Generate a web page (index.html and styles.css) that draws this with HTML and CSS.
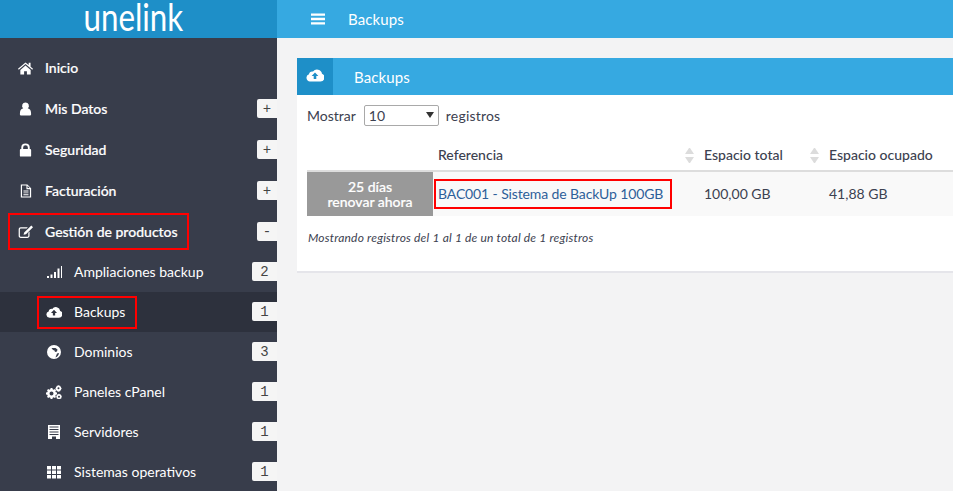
FILE: index.html
```html
<!DOCTYPE html>
<html lang="es">
<head>
<meta charset="utf-8">
<title>Backups</title>
<link rel="stylesheet" href="styles.css">
</head>
<body>
<svg class="defs" width="0" height="0" aria-hidden="true">
  <symbol id="cloud" viewBox="0 0 18 14"><path fill-rule="evenodd" d="M4 13.500A3.700 3.700 0 0 1 3 6.300 3 3 0 0 1 7 3.600 5 5 0 0 1 16 5.800a4 4 0 0 1-1.500 7.700ZM9 4.600 5.600 8h2.100v3h2.600V8h2.100Z"/></symbol>
</svg>
<div class="app">
  <header class="top">
    <div class="logo"><span class="logo-text">unelink</span></div>
    <div class="topbar">
      <svg class="bars" viewBox="0 0 15 12"><path d="M0 0h15v2.600H0zM0 4.700h15v2.600H0zM0 9.400h15V12H0z"/></svg>
      <span class="topbar-title">Backups</span>
    </div>
  </header>
  <div class="layout">
    <nav class="side">
      <a class="item"><svg class="ico" viewBox="0 0 16 14"><path d="M8 1 0 7.800l.8 1L8 2.800l7.200 6 .8-1-2.600-2.200V1.400h-2v2.500ZM2.500 9v5h4v-3.500h3V14h4V9L8 4.300Z"/></svg><span>Inicio</span></a>
      <a class="item"><svg class="ico" viewBox="0 0 16 14"><path d="M8 0a3.600 3.600 0 0 1 2.400 6.300C13 6.800 14 9 14 12.500 14 13.500 13.300 14 12.500 14h-9C2.700 14 2 13.500 2 12.500 2 9 3 6.800 5.600 6.300A3.600 3.600 0 0 1 8 0Z"/></svg><span>Mis Datos</span><b class="tag">+</b></a>
      <a class="item"><svg class="ico" viewBox="0 0 16 14"><path fill-rule="evenodd" d="M3.500 6V4.200a4.500 4.200 0 0 1 9 0V6h.5c.6 0 1 .4 1 1v6c0 .6-.4 1-1 1H3c-.6 0-1-.4-1-1V7c0-.6.4-1 1-1ZM5.500 6h5V4.200a2.500 2.300 0 0 0-5 0Z"/></svg><span>Seguridad</span><b class="tag">+</b></a>
      <a class="item"><svg class="ico" viewBox="0 0 16 14"><path fill-rule="evenodd" d="M3 0h7l4 4v10H3ZM4.300 1.200v11.600h8.400V5H9V1.200ZM10.200 1.500V3.800h2.300ZM5.800 6.500h5.400v1H5.800ZM5.800 8.500h5.400v1H5.800ZM5.800 10.500h5.400v1H5.800Z"/></svg><span>Facturación</span><b class="tag">+</b></a>
      <a class="item"><svg class="ico" viewBox="0 0 16 14"><path d="M14.200 0 16 1.800 8.500 9.300l-2.600.7.700-2.600ZM3 2h7.500L9.200 3.300H3c-.6 0-1 .4-1 1V11c0 .6.400 1 1 1h7c.6 0 1-.4 1-1V7.800l1.300-1.300V11c0 1.400-1 2.400-2.300 2.400H3C1.600 13.400.7 12.400.7 11V4.300C.7 3 1.600 2 3 2Z"/></svg><span>Gestión de productos</span><b class="tag">-</b><i class="mark mark-gestion"></i></a>
      <a class="sub"><svg class="ico-sub" viewBox="0 0 16 14"><path d="M1 11h2v2H1zM4.500 9.500h2V13h-2zM8 7h2v6H8zM11.500 3.500h2V13h-2zM15 1h1v12h-1z"/></svg><span>Ampliaciones backup</span><b class="num">2</b></a>
      <a class="sub is-active"><svg class="ico-sub" viewBox="0 0 18 14"><use href="#cloud"/></svg><span>Backups</span><b class="num">1</b><i class="mark mark-backups"></i></a>
      <a class="sub"><svg class="ico-sub" viewBox="0 0 16 14"><path fill-rule="evenodd" d="M8 0a7 7 0 1 1 0 14A7 7 0 0 1 8 0ZM5.500 3 7 5l1.500.5L9 7l2-.5.500-2L9.500 3ZM13 8l-2 .5-1 2.500-.5 1.500a5.500 5.500 0 0 0 3.500-4.500Z"/></svg><span>Dominios</span><b class="num">3</b></a>
      <a class="sub"><svg class="ico-sub" viewBox="0 0 16 14"><path fill-rule="evenodd" d="M4.600 3h1.800l.3 1.300 1 .4L8.900 4l1.200 1.200-.7 1.100.4 1 1.200.3v1.800l-1.200.3-.4 1-.1.100.7 1.100L8.800 13l-1.100-.7-1 .4-.3 1.300H4.600l-.3-1.300-1-.4-1.100.7L1 11.800l.7-1.100-.4-1L0 9.400V7.600l1.300-.3.4-1L1 5.200 2.200 4l1.100.7 1-.4ZM5.500 6.500a2 2 0 1 0 0 4 2 2 0 0 0 0-4ZM12.500 0l.6.8.9-.2.3 1 .9.3-.2.9.8.7-.8.700.2.900-.9.300-.3 1-.9-.2-.6.8-.6-.8-.9.200-.3-1-.9-.3.2-.9-.8-.7.8-.7-.2-.9.900-.3.300-1 .9.200ZM12.500 2.300a1 1 0 1 0 0 2 1 1 0 0 0 0-2ZM13 8.600l.5.700.9-.2.2.9.9.3-.2.800.7.600-.7.700.2.800-.9.300-.2.900-.9-.2-.5.700-.6-.7-.8.200-.3-.9-.8-.3.200-.8-.7-.700.7-.6-.2-.8.800-.3.300-.9.800.2ZM13 10.700a1 1 0 1 0 0 2 1 1 0 0 0 0-2Z"/></svg><span>Paneles cPanel</span><b class="num">1</b></a>
      <a class="sub"><svg class="ico-sub" viewBox="0 0 16 14"><path fill-rule="evenodd" d="M2 0h12v14H10v-2.500H6V14H2ZM3.500 1.500v1h9v-1ZM3.500 4v1h9V4ZM3.500 6.500v1h9v-1ZM3.500 9v1h9V9Z"/></svg><span>Servidores</span><b class="num">1</b></a>
      <a class="sub"><svg class="ico-sub" viewBox="0 0 16 14"><path d="M1 1h4v3.500H1zM6 1h4v3.500H6zM11 1h4v3.500h-4zM1 5.500h4V9H1zM6 5.500h4V9H6zM11 5.500h4V9h-4zM1 10h4v3.500H1zM6 10h4v3.500H6zM11 10h4v3.500h-4z"/></svg><span>Sistemas operativos</span><b class="num">1</b></a>
    </nav>
    <main class="main">
      <section class="panel">
        <div class="panel-head">
          <div class="panel-ico"><svg class="cloud-white" viewBox="0 0 18 14"><use href="#cloud"/></svg></div>
          <h1 class="panel-title">Backups</h1>
        </div>
        <div class="panel-body">
          <div class="length">
            <span>Mostrar</span>
            <span class="select-wrap"><select class="select"><option>10</option><option>25</option></select></span>
            <span class="length-end">registros</span>
          </div>
          <table class="grid">
            <colgroup><col class="c1"><col class="c2"><col class="c3"><col></colgroup>
            <thead>
              <tr>
                <th></th>
                <th class="sortable">Referencia</th>
                <th class="sortable">Espacio total</th>
                <th>Espacio ocupado</th>
              </tr>
            </thead>
            <tbody>
              <tr>
                <td class="renew"><span class="renew-line">25 días</span><span class="renew-line">renovar ahora</span></td>
                <td class="ref"><a class="ref-link">BAC001 - Sistema de BackUp 100GB</a></td>
                <td>100,00 GB</td>
                <td>41,88 GB</td>
              </tr>
            </tbody>
          </table>
          <p class="info">Mostrando registros del 1 al 1 de un total de 1 registros</p>
        </div>
      </section>
    </main>
  </div>
</div>
</body>
</html>
```

FILE: styles.css
```css
*, *::before, *::after { box-sizing: border-box; }
html, body { margin: 0; height: 100%; overflow: hidden; }
body { font-family: Lato, "Liberation Sans", sans-serif; font-size: 14px; color: #3c4150; background: #f3f3f4; }
.defs { position: absolute; }
.app { display: flex; flex-direction: column; height: 100vh; }

.top { display: flex; height: 38px; flex: none; }
.logo { width: 277px; background: #1e8fc8; color: #fff; display: flex; justify-content: center; align-items: center; padding-right: 10px; }
.logo-text { display: block; font-size: 36px; font-weight: 400; line-height: 26px; transform: scale(.87, 1.06); margin-top: -6px; }
.topbar { flex: 1; background: #36a9e1; color: #fff; display: flex; align-items: center; padding-left: 34px; }
.bars { width: 14px; height: 12px; fill: #fff; }
.topbar-title { margin-left: 23px; font-size: 15px; letter-spacing: .1px; }

.layout { flex: 1; display: flex; min-height: 0; }
.side { width: 277px; flex: none; background: #383d4b; padding-top: 9px; overflow: hidden; color: #fff; }
.item, .sub { position: relative; display: flex; align-items: center; }
.item { height: 41px; padding-left: 18px; font-weight: 500; -webkit-text-stroke: .2px #fff; }
.ico { width: 15px; height: 14px; fill: #fff; margin-right: 12px; flex: none; }
.sub { height: 40px; padding: 0 0 1px 46px; }
.ico-sub { width: 16px; height: 14px; fill: #fff; margin-right: 12px; flex: none; }
.is-active { background: #2d313d; }
.tag, .num { margin-left: auto; height: 19px; background: #f5f5f5; color: #444; border-radius: 2px 0 0 2px; display: flex; align-items: center; justify-content: center; font-family: "Liberation Mono", monospace; font-size: 14px; font-weight: 400; -webkit-text-stroke: 0; }
.tag { width: 20px; }
.num { width: 25px; }
.mark { position: absolute; border: 2px solid #f00; }
.mark-gestion { left: 8px; top: 2px; width: 181px; height: 37px; }
.mark-backups { left: 37px; top: 4px; width: 100px; height: 33px; }

.main { flex: 1; min-width: 0; padding: 20px 0 0 20px; }
.panel { background: #fff; border-bottom: 2px solid #e5e5ea; height: 215px; }
.panel-head { display: flex; align-items: center; height: 37px; background: #36a9e1; color: #fff; }
.panel-ico { width: 36px; height: 37px; background: #1e8fc8; display: flex; align-items: center; justify-content: center; padding-bottom: 4px; }
.cloud-white { width: 18px; height: 14px; fill: #fff; }
.panel-title { margin: 0 0 0 21px; font-size: 15px; font-weight: 400; letter-spacing: .1px; }
.panel-body { padding: 10px 0 0 10px; }
.length { display: flex; align-items: center; gap: 8px; height: 21px; }
.length-end { margin-left: -1px; letter-spacing: .2px; }
.select-wrap { position: relative; display: block; width: 75px; height: 21px; }
.select-wrap::after { content: ""; position: absolute; right: 5px; top: 7px; border: 4px solid transparent; border-top: 6px solid #333; border-bottom: 0; }
.select { appearance: none; width: 100%; height: 100%; background: #fff; border: 1px solid #a9a9a9; border-radius: 2px; padding: 0 4px; font: 14px Lato, sans-serif; color: #3c4150; }

.grid { width: 100%; table-layout: fixed; border-collapse: collapse; margin-top: 14px; }
.c1 { width: 126px; }
.c2 { width: 266px; }
.c3 { width: 125px; }
.grid th { height: 31px; padding: 0 5px 2px; text-align: left; font-weight: 500; border-bottom: 2px solid #ddd; position: relative; }
.sortable::before, .sortable::after { content: ""; position: absolute; right: 5px; width: 9px; height: 6px; border: 4.5px solid transparent; border-top: 0; border-bottom: 6px solid #dcdcdc; }
.sortable::before { top: 8px; }
.sortable::after { top: 17px; border-bottom: 0; border-top: 6px solid #dcdcdc; }
.grid td { height: 45px; padding: 0 5px 2px; background: #f9f9f9; }
.grid .renew { padding: 0 5px; background: #999; color: #fff; text-align: center; font-weight: 500; font-size: 14px; line-height: 15px; -webkit-text-stroke: .2px #fff; }
.renew-line { display: block; height: 15px; }
.ref { position: relative; }
.ref-link { color: #2d5f9a; letter-spacing: -.12px; }
.ref::after { content: ""; position: absolute; left: 1px; top: 7px; width: 238px; height: 30px; border: 2px solid #f00; }
.info { margin: 14px 0 0 1px; font-size: 12px; font-style: italic; color: #3c4150; letter-spacing: .2px; }
```
